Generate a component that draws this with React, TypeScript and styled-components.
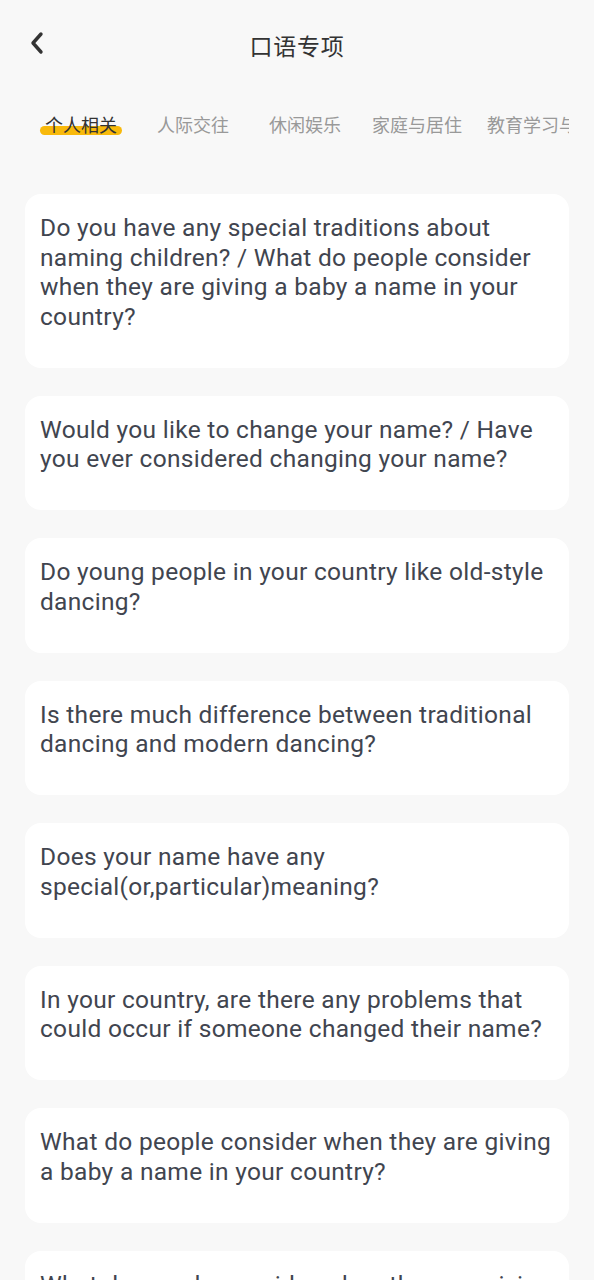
import React from "react";
import styled, { createGlobalStyle } from "styled-components";

const Global = createGlobalStyle`
  html, body { margin: 0; padding: 0; background: #f8f8f8; }
  body { font-family: Roboto, "Noto Sans CJK SC", sans-serif; }
`;

const Page = styled.div`
  width: 594px;
  min-height: 1280px;
  background: #f8f8f8;
  display: flex;
  flex-direction: column;
`;

const Header = styled.div`
  height: 90px;
  display: flex;
  align-items: center;
  justify-content: center;
  position: relative;
`;

const Back = styled.button`
  position: absolute;
  left: 23px;
  top: 28px;
  width: 28px;
  height: 30px;
  border: none;
  background: none;
  padding: 0;
  display: flex;
  align-items: center;
  justify-content: center;
`;

const Title = styled.h1`
  margin: 0;
  font-family: "Noto Sans CJK SC", sans-serif;
  font-weight: 400;
  font-size: 23px;
  color: #333;
  letter-spacing: 0.7px;
`;

const Tabs = styled.div`
  margin: 12px 25px 0;
  width: 544px;
  height: 46px;
  display: flex;
  overflow: hidden;
`;

const Tab = styled.div<{ $active?: boolean; $clipped?: boolean }>`
  flex: 0 0 112px;
  box-sizing: border-box;
  padding: 0 ${(p) => (p.$clipped ? "0 0 14px" : "5px")};
  display: flex;
  justify-content: ${(p) => (p.$clipped ? "flex-start" : "center")};
  align-items: center;
  font-family: "Noto Sans CJK SC", sans-serif;
  font-size: 18px;
  white-space: nowrap;
  color: ${(p) => (p.$active ? "#333" : "#999")};
  position: relative;
`;

const Label = styled.span`
  position: relative;
  z-index: 1;
  margin-top: -3px;
`;

const Underline = styled.span`
  position: absolute;
  left: 15px;
  width: 82px;
  top: 24px;
  height: 9px;
  border-radius: 5px;
  background: #f8b90b;
  z-index: 0;
`;

const List = styled.div`
  margin-top: 46px;
  padding: 0 25px;
  display: flex;
  flex-direction: column;
  gap: 28px;
`;

const Card = styled.div`
  background: #fff;
  border-radius: 16px;
  padding: 19px 15px 36.5px;
  font-size: 24.5px;
  letter-spacing: 0.3px;
  line-height: 29.5px;
  color: #41454f;
`;

const tabs = ["个人相关", "人际交往", "休闲娱乐", "家庭与居住", "教育学习与工作"];

const questions = [
  "Do you have any special traditions about naming children? / What do people consider when they are giving a baby a name in your country?",
  "Would you like to change your name? / Have you ever considered changing your name?",
  "Do young people in your country like old-style dancing?",
  "Is there much difference between traditional dancing and modern dancing?",
  "Does your name have any special(or,particular)meaning?",
  "In your country, are there any problems that could occur if someone changed their name?",
  "What do people consider when they are giving a baby a name in your country?",
  "What do people consider when they are giving a baby a name in your country?",
];

export default function App() {
  return (
    <Page>
      <Global />
      <Header>
        <Back aria-label="back">
          <svg width="16" height="24" viewBox="0 0 16 24">
            <path d="M12 3 L4 12 L12 21" fill="none" stroke="#333" strokeWidth="3.4" strokeLinecap="round" strokeLinejoin="round" />
          </svg>
        </Back>
        <Title>口语专项</Title>
      </Header>
      <Tabs>
        {tabs.map((t, i) => (
          <Tab key={t} $active={i === 0} $clipped={i === tabs.length - 1}>
            {i === 0 && <Underline />}
            <Label>{t}</Label>
          </Tab>
        ))}
      </Tabs>
      <List>
        {questions.map((q, i) => (
          <Card key={i}>{q}</Card>
        ))}
      </List>
    </Page>
  );
}
